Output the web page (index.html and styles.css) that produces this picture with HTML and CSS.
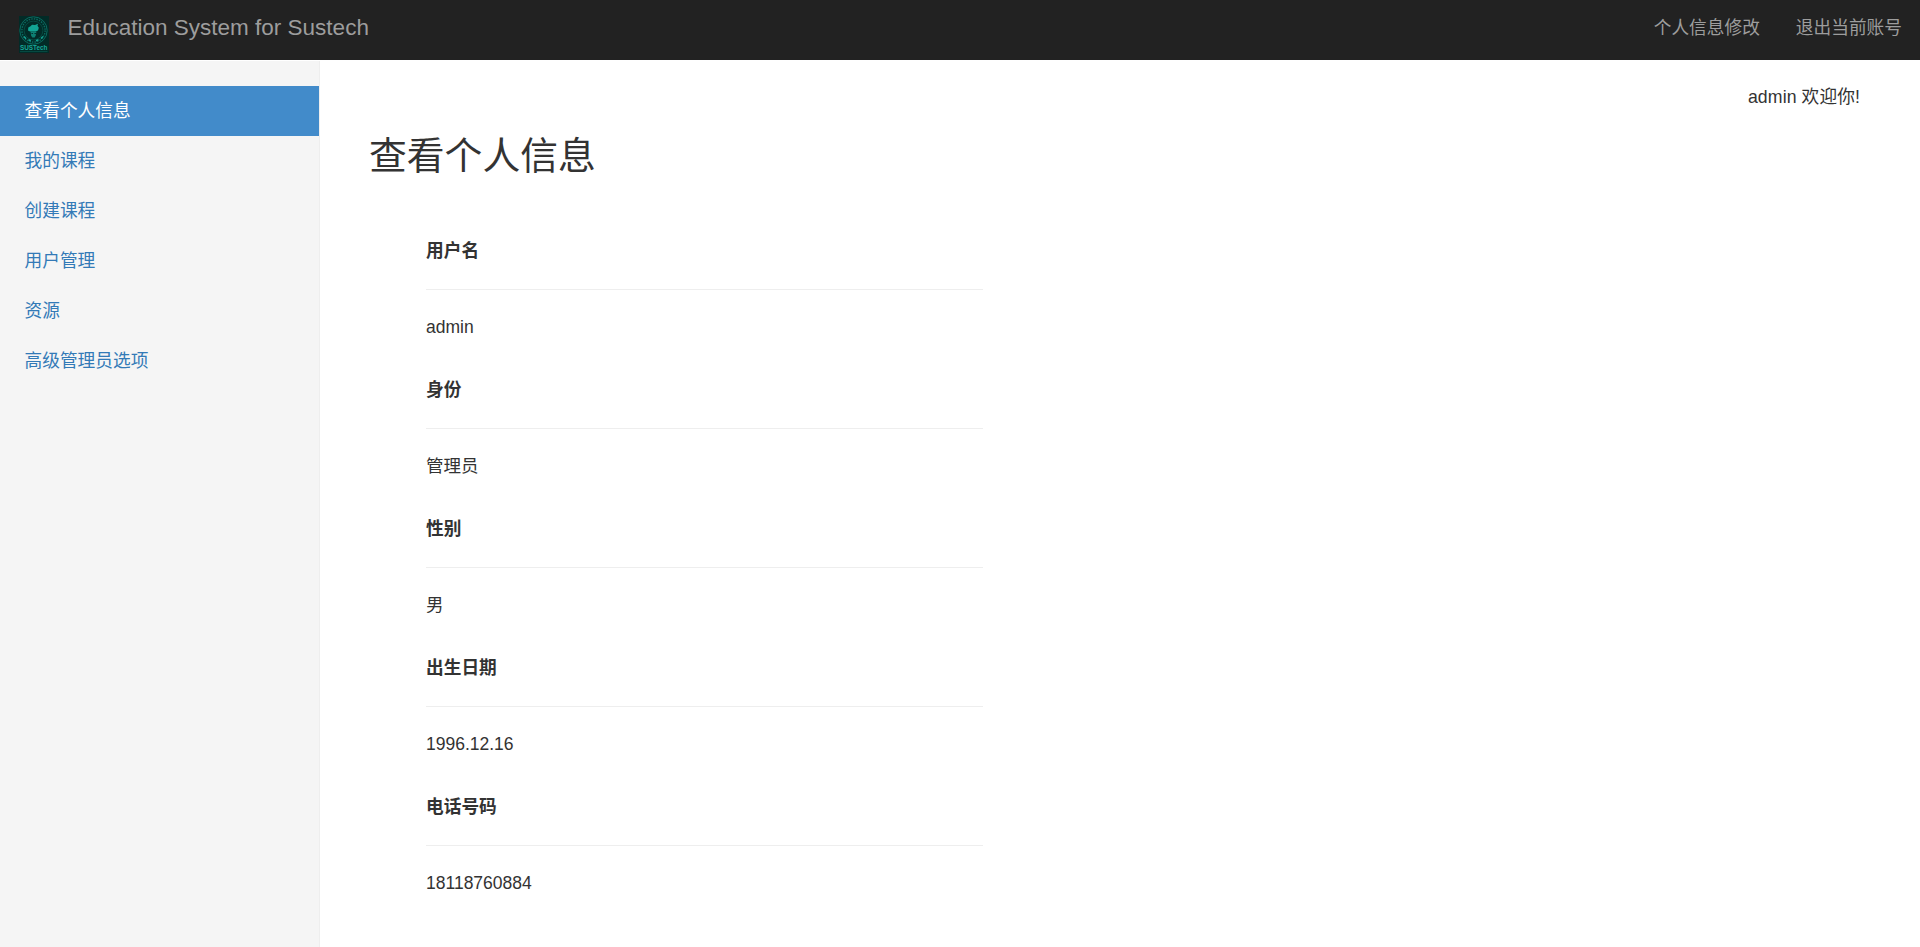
FILE: index.html
```html
<!DOCTYPE html>
<html lang="zh-CN">
<head>
<meta charset="utf-8">
<title>Education System for Sustech</title>
<link rel="stylesheet" href="styles.css">
</head>
<body>
<header class="navbar">
  <svg class="logo" viewBox="0 0 30 37" width="30" height="37">
    <rect width="30" height="37" fill="#022b27"/>
    <circle cx="14.5" cy="14.5" r="13.7" fill="none" stroke="#0a6b60" stroke-width="1"/>
    <circle cx="14.5" cy="14.5" r="11.6" fill="none" stroke="#0a6b60" stroke-width="1.4" stroke-dasharray="1.5 1.1"/>
    <circle cx="14.5" cy="14.5" r="9.4" fill="none" stroke="#085247" stroke-width=".8"/>
    <path d="M9 14.5l.3-3 2.200-1.200 1.500-1.500 3 .2 3-1.200-.5 2 1.300 2-.8 2.700-2.600 1H11z" fill="#12a594"/>
    <path d="M11.500 15.500h6l-.8 4-1 2h-2.400l-1.200-2z" fill="#0d7f72"/>
    <path d="M12.500 17.500h1.400M15.500 17.500h1.400" stroke="#022b27"/>
    <path d="M5 20.500l2 2.300M9.500 23.800l2.300.9M17 24.700l2.500-.9M22 22.500l2-2" stroke="#14a192" stroke-width="1.500"/>
    <text class="logo-text" x="1" y="34" textLength="27.500" lengthAdjust="spacingAndGlyphs">SUSTech</text>
    <path d="M1 35.500h27.500" stroke="#075248" stroke-width=".8"/>
  </svg>
  <a class="brand">Education System for Sustech</a>
  <nav class="nav-links"><a>个人信息修改</a><a>退出当前账号</a></nav>
</header>
<div class="page">
  <aside class="sidebar">
    <a class="side-link active">查看个人信息</a>
    <a class="side-link">我的课程</a>
    <a class="side-link">创建课程</a>
    <a class="side-link">用户管理</a>
    <a class="side-link">资源</a>
    <a class="side-link">高级管理员选项</a>
  </aside>
  <main class="main">
    <p class="welcome">admin 欢迎你!</p>
    <h2 class="title">查看个人信息</h2>
    <dl class="profile">
      <dt>用户名</dt><dd>admin</dd>
      <dt>身份</dt><dd>管理员</dd>
      <dt>性别</dt><dd>男</dd>
      <dt>出生日期</dt><dd>1996.12.16</dd>
      <dt>电话号码</dt><dd>18118760884</dd>
    </dl>
  </main>
</div>
</body>
</html>
```
FILE: styles.css
```css
* { box-sizing: border-box; }
body {
  margin: 0;
  height: 947px;
  display: flex;
  flex-direction: column;
  overflow: hidden;
  background: #fff;
  color: #333;
  font: 17.5px/25px "Liberation Sans", "Noto Sans CJK SC", sans-serif;
}
.navbar {
  flex: none;
  display: flex;
  align-items: flex-start;
  height: 60px;
  margin-bottom: 1px;
  padding: 0 18px 0 19px;
  background: #222;
  color: #9d9d9d;
}
.logo { flex: none; margin-top: 16px; overflow: visible; }
.logo-text { font: bold 7.5px "Liberation Sans", sans-serif; fill: #18a999; }
.brand { margin: 15px 0 0 18.5px; font-size: 22.5px; }
.nav-links { display: flex; gap: 36px; margin: 16px 0 0 auto; font-size: 17.7px; }
.page { flex: 1; display: flex; min-height: 0; }
.sidebar {
  flex: none;
  width: 320px;
  padding-top: 25px;
  background: #f5f5f5;
  border-right: 1px solid #eee;
}
.side-link {
  display: block;
  height: 50px;
  padding: 13px 0 0 24.5px;
  color: #337ab7;
  font-size: 17.7px;
}
.side-link.active { background: #428bca; color: #fff; }
.main { flex: 1; padding: 24px 60px 0 50px; }
.welcome { margin: 0; text-align: right; font-size: 17.7px; letter-spacing: .1px; }
.title { margin: 26px 0 0 -1px; font-size: 37.8px; line-height: 41px; font-weight: 400; }
.profile { width: 557px; margin: 61px 0 0 56px; }
.profile dt {
  height: 52px;
  padding-top: 1px;
  border-bottom: 1px solid #eee;
  font-size: 17.7px;
  font-weight: 700;
}
.profile dd { margin: 25px 0 37px; }
```
